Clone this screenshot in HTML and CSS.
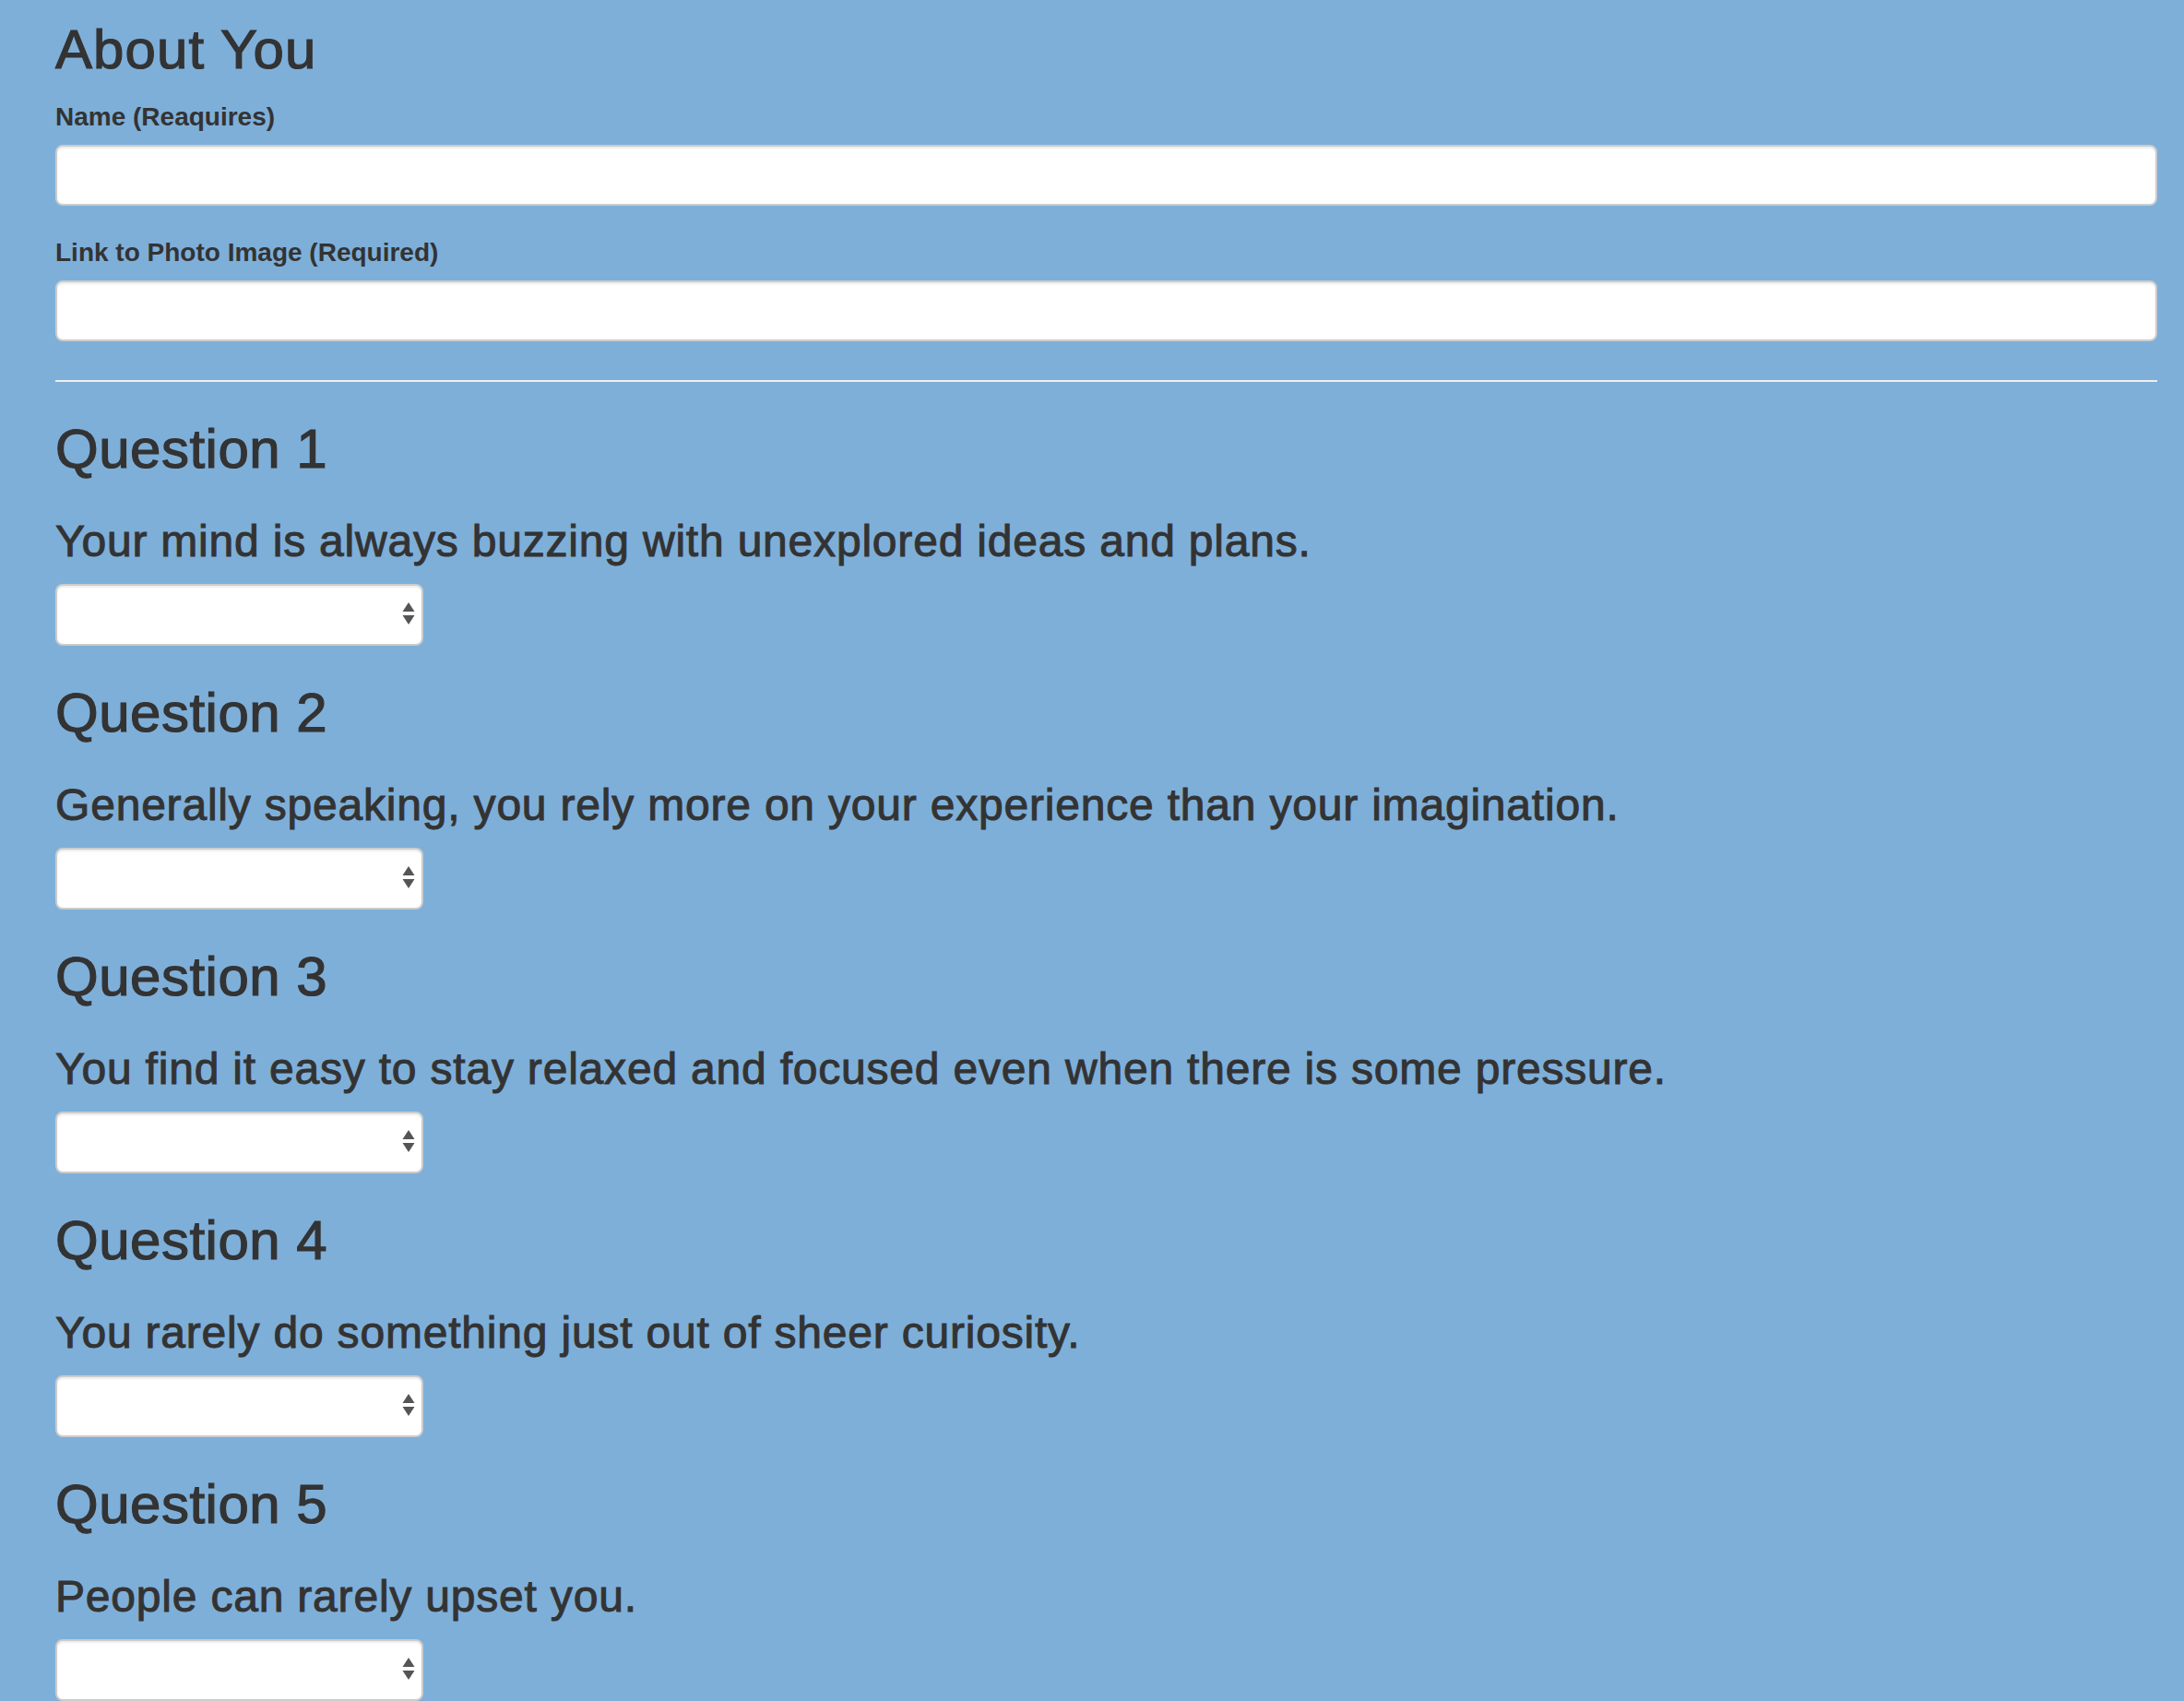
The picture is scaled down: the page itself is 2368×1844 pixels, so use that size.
FILE: index.html
```html
<!DOCTYPE html>
<html lang="en">
<head>
<meta charset="utf-8">
<title>Survey</title>
<link rel="stylesheet" href="styles.css">
</head>
<body>
<div class="container">
  <h2 class="first">About You</h2>
  <div class="form-group">
    <label class="lbl">Name (Reaquires)</label>
    <input class="field" type="text">
  </div>
  <div class="form-group">
    <label class="lbl">Link to Photo Image (Required)</label>
    <input class="field" type="text">
  </div>
  <hr class="rule">

  <h2>Question 1</h2>
  <h3>Your mind is always buzzing with unexplored ideas and plans.</h3>
  <div class="select-wrap"><select class="choice"><option></option></select><span class="arrows"><svg width="14" height="26" viewBox="0 0 14 26"><path d="M7 0 L13.5 10 L0.5 10 Z" fill="#555"/><path d="M0.5 14 L13.5 14 L7 24 Z" fill="#555"/></svg></span></div>

  <h2>Question 2</h2>
  <h3>Generally speaking, you rely more on your experience than your imagination.</h3>
  <div class="select-wrap"><select class="choice"><option></option></select><span class="arrows"><svg width="14" height="26" viewBox="0 0 14 26"><path d="M7 0 L13.5 10 L0.5 10 Z" fill="#555"/><path d="M0.5 14 L13.5 14 L7 24 Z" fill="#555"/></svg></span></div>

  <h2>Question 3</h2>
  <h3>You find it easy to stay relaxed and focused even when there is some pressure.</h3>
  <div class="select-wrap"><select class="choice"><option></option></select><span class="arrows"><svg width="14" height="26" viewBox="0 0 14 26"><path d="M7 0 L13.5 10 L0.5 10 Z" fill="#555"/><path d="M0.5 14 L13.5 14 L7 24 Z" fill="#555"/></svg></span></div>

  <h2>Question 4</h2>
  <h3>You rarely do something just out of sheer curiosity.</h3>
  <div class="select-wrap"><select class="choice"><option></option></select><span class="arrows"><svg width="14" height="26" viewBox="0 0 14 26"><path d="M7 0 L13.5 10 L0.5 10 Z" fill="#555"/><path d="M0.5 14 L13.5 14 L7 24 Z" fill="#555"/></svg></span></div>

  <h2>Question 5</h2>
  <h3>People can rarely upset you.</h3>
  <div class="select-wrap"><select class="choice"><option></option></select><span class="arrows"><svg width="14" height="26" viewBox="0 0 14 26"><path d="M7 0 L13.5 10 L0.5 10 Z" fill="#555"/><path d="M0.5 14 L13.5 14 L7 24 Z" fill="#555"/></svg></span></div>
</div>
</body>
</html>
```
FILE: styles.css
```css
html, body {
  margin: 0;
  padding: 0;
}
body {
  background: #7eafd9;
  color: #333;
  font-family: "Liberation Sans", Arial, Helvetica, sans-serif;
  font-size: 28px;
  line-height: 40px;
  overflow: hidden;
}
.container {
  padding: 21px 29px 0 60px;
}
h2 {
  font-size: 60px;
  line-height: 66px;
  font-weight: 500;
  letter-spacing: 0.5px;
  -webkit-text-stroke: 1.2px #333;
  margin: 40px 0 20px;
}
h2.first {
  margin-top: 0;
  letter-spacing: 1.1px;
}
h3 {
  font-size: 48px;
  line-height: 53px;
  font-weight: 500;
  letter-spacing: 0.8px;
  -webkit-text-stroke: 1px #333;
  margin: 40px 0 20px;
}
.form-group {
  margin-bottom: 31px;
}
.lbl {
  display: block;
  font-weight: bold;
  font-size: 28px;
  line-height: 40px;
  margin-bottom: 10px;
}
.field {
  display: block;
  box-sizing: border-box;
  width: 100%;
  height: 66px;
  margin: 0;
  border: 2px solid #ccc;
  border-radius: 8px;
  background: #fff;
  box-shadow: inset 0 2px 2px rgba(0, 0, 0, 0.075);
  font-size: 28px;
  padding: 12px 24px;
}
.rule {
  margin: 42px 0 40px;
  border: 0;
  border-top: 2px solid #eee;
  height: 0;
}
.select-wrap {
  position: relative;
  width: 399px;
  height: 67px;
}
.choice {
  -webkit-appearance: none;
  appearance: none;
  display: block;
  box-sizing: border-box;
  width: 399px;
  height: 67px;
  margin: 0;
  border: 2px solid #ccc;
  border-radius: 8px;
  background: #fff;
  box-shadow: inset 0 2px 2px rgba(0, 0, 0, 0.075);
  font-size: 28px;
  font-family: inherit;
}
.arrows {
  position: absolute;
  right: 9px;
  top: 20px;
  width: 14px;
  height: 26px;
  line-height: 0;
  pointer-events: none;
}
```
